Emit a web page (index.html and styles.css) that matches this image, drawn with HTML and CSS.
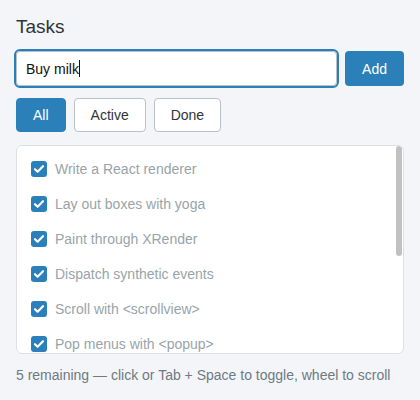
FILE: index.html
```html
<!DOCTYPE html>
<html>
<head>
<meta charset="utf-8">
<link rel="stylesheet" href="styles.css">
</head>
<body>
<div class="app">
  <h1 class="title">Tasks</h1>
  <div class="add-row">
    <div class="input"><span>Buy milk</span><span class="caret"></span></div>
    <button class="btn btn-primary add">Add</button>
  </div>
  <div class="filters">
    <button class="btn filter active">All</button>
    <button class="btn filter">Active</button>
    <button class="btn filter">Done</button>
  </div>
  <div class="list">
    <ul class="items">
      <li class="item done"><span class="check"><svg viewBox="0 0 16 16"><path d="M4 8.2 L6.6 10.7 L12 5.2"/></svg></span><span class="label">Write a React renderer</span></li>
      <li class="item done"><span class="check"><svg viewBox="0 0 16 16"><path d="M4 8.2 L6.6 10.7 L12 5.2"/></svg></span><span class="label">Lay out boxes with yoga</span></li>
      <li class="item done"><span class="check"><svg viewBox="0 0 16 16"><path d="M4 8.2 L6.6 10.7 L12 5.2"/></svg></span><span class="label">Paint through XRender</span></li>
      <li class="item done"><span class="check"><svg viewBox="0 0 16 16"><path d="M4 8.2 L6.6 10.7 L12 5.2"/></svg></span><span class="label">Dispatch synthetic events</span></li>
      <li class="item done"><span class="check"><svg viewBox="0 0 16 16"><path d="M4 8.2 L6.6 10.7 L12 5.2"/></svg></span><span class="label">Scroll with &lt;scrollview&gt;</span></li>
      <li class="item done"><span class="check"><svg viewBox="0 0 16 16"><path d="M4 8.2 L6.6 10.7 L12 5.2"/></svg></span><span class="label">Pop menus with &lt;popup&gt;</span></li>
    </ul>
    <div class="thumb"></div>
  </div>
  <p class="footer">5 remaining — click or Tab + Space to toggle, wheel to scroll</p>
</div>
</body>
</html>
```

FILE: styles.css
```css
html, body {
  margin: 0;
  padding: 0;
  background: #f3f5f9;
}
body {
  font-family: "Liberation Sans", Arial, sans-serif;
  color: #2d3438;
}
.app {
  padding: 16px 16px 0 16px;
  display: flex;
  flex-direction: column;
}
.title {
  margin: 0;
  font-size: 19px;
  font-weight: normal;
  line-height: 22px;
  color: #2f3539;
}
.add-row {
  margin-top: 13px;
  display: flex;
  gap: 8px;
  height: 35px;
}
.input {
  flex: 1;
  box-sizing: border-box;
  height: 35px;
  border: 1px solid #b8c0c8;
  border-radius: 4px;
  outline: 2px solid #2a7fba;
  background: #fff;
  display: flex;
  align-items: center;
  padding: 0 9px;
  font-size: 14px;
  color: #111;
}
.caret {
  display: inline-block;
  width: 1px;
  height: 17px;
  background: #111;
}
.btn {
  font-family: "Liberation Sans", Arial, sans-serif;
  font-size: 14px;
  box-sizing: border-box;
  border-radius: 4px;
  cursor: pointer;
}
.btn-primary {
  background: #2b80ba;
  color: #fff;
  border: none;
  padding: 0 17px;
  height: 35px;
}
.filters {
  margin-top: 12px;
  display: flex;
  gap: 8px;
}
.filter {
  height: 34px;
  padding: 0 16px;
  border: 1px solid #b8c0c8;
  background: #fff;
  color: #2f3539;
}
.filter.active {
  background: #2b80ba;
  border-color: #2b80ba;
  color: #fff;
}
.list {
  position: relative;
  margin-top: 13px;
  height: 209px;
  box-sizing: border-box;
  background: #fff;
  border: 1px solid #dde1e6;
  border-radius: 6px;
  overflow: hidden;
}
.items {
  list-style: none;
  margin: 0;
  padding: 5px 0 0 0;
}
.item {
  height: 35px;
  display: flex;
  align-items: center;
  gap: 8px;
  padding: 0 14px;
  font-size: 14px;
  color: #2f3539;
}
.item.done {
  color: #99a4a9;
}
.check {
  width: 16px;
  height: 16px;
  border-radius: 3px;
  background: #2b7fba;
  display: flex;
  flex-shrink: 0;
}
.check svg {
  width: 16px;
  height: 16px;
  fill: none;
  stroke: #fff;
  stroke-width: 2.2;
  stroke-linecap: round;
  stroke-linejoin: round;
}
.thumb {
  position: absolute;
  top: 0;
  right: 1px;
  width: 6px;
  height: 110px;
  border-radius: 3px;
  background: #c1c1c1;
}
.footer {
  margin: 13px 0 0 0;
  font-size: 14px;
  line-height: 16px;
  color: #6f7a82;
}
```
